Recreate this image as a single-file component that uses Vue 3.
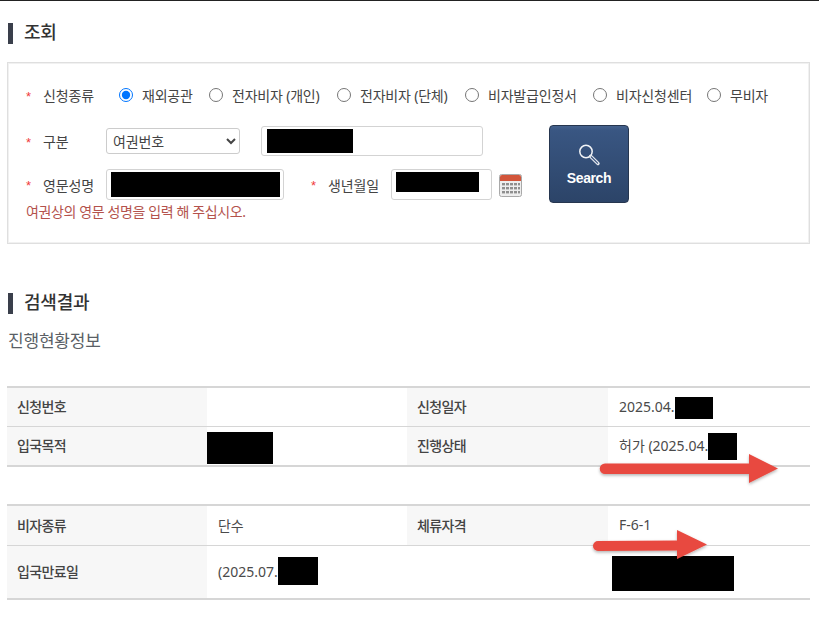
<script setup>
const radios = [
  { label: '재외공관', checked: true },
  { label: '전자비자 (개인)', checked: false },
  { label: '전자비자 (단체)', checked: false },
  { label: '비자발급인정서', checked: false },
  { label: '비자신청센터', checked: false },
  { label: '무비자', checked: false },
]
</script>

<template>
  <div class="page">
    <section class="wrap">
      <h2 class="heading first">조회</h2>

      <form class="box" @submit.prevent>
        <div class="row-type">
          <span class="req">*</span>
          <span class="lab">신청종류</span>
          <div class="radios">
            <label v-for="r in radios" :key="r.label" class="radio">
              <input type="radio" name="kind" :checked="r.checked" />
              <span>{{ r.label }}</span>
            </label>
          </div>
        </div>

        <div class="lower">
          <div class="fields">
            <div class="row-two">
              <span class="req">*</span>
              <span class="lab">구분</span>
              <select class="sel">
                <option>여권번호</option>
              </select>
              <div class="field f-passport"><i class="ink i-passport"></i></div>
            </div>
            <div class="row-three">
              <span class="req">*</span>
              <span class="lab">영문성명</span>
              <div class="field f-name"><i class="ink i-name"></i></div>
              <span class="req req-birth">*</span>
              <span class="lab lab-birth">생년월일</span>
              <div class="field f-birth"><i class="ink i-birth"></i></div>
              <svg class="cal" width="23" height="23" viewBox="0 0 23 23">
                <rect x="0.5" y="0.5" width="22" height="22" rx="2" fill="#eeeeee" stroke="#a9a9a9" />
                <path d="M1 3a2 2 0 0 1 2-2h17a2 2 0 0 1 2 2v4H1z" fill="#d2553a" />
                <g fill="#8f8f8f">
                  <rect x="3" y="9" width="3" height="2.4" /><rect x="7" y="9" width="3" height="2.4" /><rect x="11" y="9" width="3" height="2.4" /><rect x="15" y="9" width="3" height="2.4" /><rect x="19" y="9" width="2" height="2.4" />
                  <rect x="3" y="13" width="3" height="2.4" /><rect x="7" y="13" width="3" height="2.4" /><rect x="11" y="13" width="3" height="2.4" /><rect x="15" y="13" width="3" height="2.4" /><rect x="19" y="13" width="2" height="2.4" />
                  <rect x="3" y="17" width="3" height="2.4" /><rect x="7" y="17" width="3" height="2.4" /><rect x="11" y="17" width="3" height="2.4" /><rect x="15" y="17" width="3" height="2.4" /><rect x="19" y="17" width="2" height="2.4" />
                </g>
              </svg>
            </div>
            <p class="hint">여권상의 영문 성명을 입력 해 주십시오.</p>
          </div>

          <button class="search" type="button">
            <svg width="24" height="24" viewBox="0 0 24 24" fill="none">
              <circle cx="9" cy="8.5" r="6.2" stroke="#f2f4f7" stroke-width="1.5" />
              <path d="M13.6 13.2 L21 20.5" stroke="#e6e9ee" stroke-width="3.4" stroke-linecap="round" />
              <path d="M14.4 14 L20.6 20.1" stroke="#3a5580" stroke-width="1.2" stroke-linecap="round" />
            </svg>
            <span class="search-text">Search</span>
          </button>
        </div>
      </form>

      <h2 class="heading second">검색결과</h2>
      <h3 class="sub">진행현황정보</h3>

      <div class="table t-one">
        <div class="th">신청번호</div>
        <div class="td"></div>
        <div class="th">신청일자</div>
        <div class="td"><span class="num">2025.04.</span><i class="ink i-date"></i></div>
        <div class="th">입국목적</div>
        <div class="td flush"><i class="ink i-purpose"></i></div>
        <div class="th">진행상태</div>
        <div class="td"><span class="num">허가 (2025.04.</span><i class="ink i-status"></i></div>
      </div>

      <div class="table t-two">
        <div class="th">비자종류</div>
        <div class="td">단수</div>
        <div class="th">체류자격</div>
        <div class="td"><span class="num">F-6-1</span></div>
        <div class="th">입국만료일</div>
        <div class="td"><span class="num">(2025.07.</span><i class="ink i-expiry"></i></div>
        <div class="th plain"></div>
        <div class="td tight"><i class="ink i-stay"></i></div>
      </div>
    </section>

    <svg class="arrows" width="819" height="618" viewBox="0 0 819 618">
      <defs>
        <filter id="arrow-shadow" x="-10%" y="-40%" width="120%" height="200%">
          <feDropShadow dx="0" dy="1.5" stdDeviation="1.5" flood-color="#000" flood-opacity="0.3" />
        </filter>
      </defs>
      <g fill="#e8493f" filter="url(#arrow-shadow)">
        <path d="M605 463.500 H749 V454 L778 468.500 L749 483 V474 H605 a5.250 5.250 0 0 1 0-10.500z" />
        <path d="M598 541 L677 540.500 V530 L707 544.500 L677 559 V550.500 L598 551 a5 5 0 0 1 0-10z" />
      </g>
    </svg>
  </div>
</template>

<style>
html, body { margin: 0; background: #fff; }
</style>

<style scoped>
.page {
  position: relative;
  height: 618px;
  overflow: hidden;
  border-top: 1px solid #222;
  box-sizing: border-box;
  font-family: "Noto Sans", "Noto Sans CJK KR", sans-serif;
  font-size: 14px;
  letter-spacing: -0.12px;
  color: #444;
}
.wrap { margin-left: 7px; width: 803px; }
.heading {
  margin: 0 0 0 1px;
  height: 21px;
  line-height: 19px;
  padding-left: 11px;
  border-left: 5px solid #3a3f4b;
  font-size: 18px;
  font-weight: 500;
  letter-spacing: -0.2px;
  color: #333;
}
.first { margin-top: 22px; }
.second { margin-top: 49px; }
.sub {
  margin: 17px 0 0 1px;
  height: 20px;
  line-height: 19px;
  font-size: 17px;
  font-weight: 400;
  letter-spacing: -0.2px;
  color: #5a5f66;
}
.box {
  box-sizing: border-box;
  height: 182px;
  margin-top: 18px;
  padding: 17px 0 0 18px;
  border: 1px solid #dfdfdf;
  box-shadow: inset 0 0 0 1px #f1f1f1;
}
.row-type, .row-two, .row-three { display: flex; align-items: center; }
.row-type { height: 30px; }
.row-two { height: 30px; }
.row-three { height: 31px; margin-top: 13px; }
.req {
  flex: none;
  width: 17px;
  color: #f03a3a;
  font-family: "Liberation Sans", sans-serif;
  font-size: 13px;
  padding-top: 2px;
}
.lab { flex: none; width: 63px; color: #444; }
.radios {
  display: grid;
  grid-template-columns: 90px 128px 128px 128px 114px auto;
  margin-left: 13px;
}
.radio { display: flex; align-items: center; gap: 9px; white-space: nowrap; letter-spacing: -0.2px; }
.radio input { width: 14px; height: 14px; margin: 0; }
.lower { display: flex; align-items: flex-start; margin-top: 15px; }
.fields { box-sizing: border-box; width: 523px; padding-top: 1px; }
.sel {
  box-sizing: border-box;
  width: 134px;
  height: 26px;
  padding: 0 0 0 2px;
  border: 1px solid #ccc;
  border-radius: 3px;
  background: #fff;
  color: #444;
  font: inherit;
  letter-spacing: inherit;
}
.field {
  box-sizing: border-box;
  display: flex;
  align-items: center;
  height: 30px;
  border: 1px solid #d3d3d3;
  border-radius: 3px;
  background: #fff;
}
.row-three .field { height: 31px; }
.f-passport { width: 222px; margin-left: 21px; padding-left: 5px; }
.f-name { width: 178px; padding-left: 4px; }
.f-birth { width: 101px; padding: 0 0 5px 4px; }
.req-birth { margin-left: 27px; }
.lab-birth { width: 63px; }
.cal { margin: 2px 0 0 7px; }
.ink { display: inline-block; flex: none; background: #000; }
.i-passport { width: 86px; height: 24px; }
.i-name { width: 169px; height: 25px; }
.i-birth { width: 83px; height: 20px; }
.i-date { width: 38px; height: 22px; margin-top: 4px; }
.i-purpose { width: 66px; height: 32px; margin-top: 5px; }
.i-status { width: 29px; height: 27px; margin-top: 3px; }
.i-expiry { width: 40px; height: 28px; }
.i-stay { width: 122px; height: 35px; margin-top: 4px; }
.hint {
  margin: 4px 0 0;
  height: 16px;
  line-height: 16px;
  color: #b4524c;
  font-size: 14px;
  letter-spacing: -0.38px;
}
.search {
  box-sizing: border-box;
  flex: none;
  display: flex;
  flex-direction: column;
  align-items: center;
  justify-content: flex-start;
  width: 80px;
  height: 78px;
  padding: 17px 0 0;
  border: 1px solid #26364f;
  border-radius: 4px;
  background: linear-gradient(#45628d 0, #395682 6%, #2c4468 100%);
  color: #fff;
  font-family: "Liberation Sans", sans-serif;
  font-size: 14px;
  font-weight: 700;
  letter-spacing: -0.4px;
  line-height: 16px;
}
.search-text { margin-top: 3px; }
.table {
  display: grid;
  grid-template-columns: 200px 200px 201px 202px;
  border-top: 2px solid #d6d6d6;
  border-bottom: 2px solid #d6d6d6;
}
.t-one { margin-top: 35px; grid-template-rows: 39px 38px; }
.t-two { margin-top: 37px; grid-template-rows: 40px 52px; }
.th, .td { display: flex; align-items: center; box-sizing: border-box; padding-bottom: 2px; }
.th {
  padding-left: 10px;
  background: #f7f7f7;
  font-weight: 500;
  letter-spacing: -0.6px;
  color: #444;
}
.plain { background: #fff; }
.td { padding-left: 11px; background: #fff; color: #4a4a4a; }
.flush { padding-left: 0; }
.tight { padding-left: 4px; }
.table > :nth-child(-n + 4) { border-bottom: 1px solid #d6d6d6; }
.t-two > :nth-child(7) { display: block; }
.num { color: #4a4a4a; white-space: pre; letter-spacing: 0; }
.arrows { position: absolute; left: 0; top: -1px; pointer-events: none; }
</style>
